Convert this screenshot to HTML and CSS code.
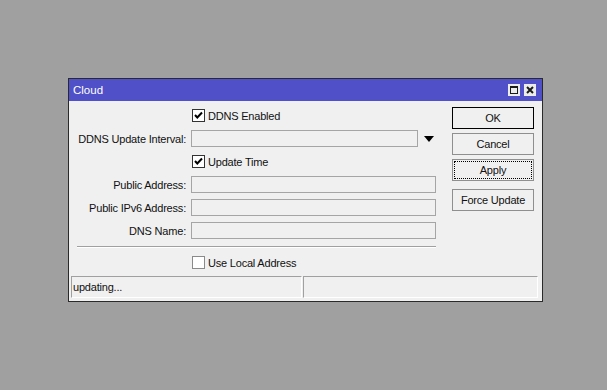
FILE: index.html
```html
<!DOCTYPE html>
<html lang="en">
<head>
    <meta charset="UTF-8">
    <title>Cloud</title>
    <link rel="stylesheet" href="styles.css">
</head>
<body>

<div class="window">
    <div class="titlebar">
        <span class="title">Cloud</span>
        <div class="tb-buttons">
            <span class="tb-btn">
                <svg width="12" height="12" viewBox="0 0 12 12">
                    <rect x="2.5" y="2.5" width="7" height="7" fill="none" stroke="#1a1a1a" stroke-width="1"/>
                    <line x1="2" y1="3" x2="10" y2="3" stroke="#1a1a1a" stroke-width="2"/>
                </svg>
            </span>
            <span class="tb-btn">
                <svg width="12" height="12" viewBox="0 0 12 12">
                    <path d="M3 3 L9 9 M9 3 L3 9" stroke="#1a1a1a" stroke-width="2" fill="none"/>
                </svg>
            </span>
        </div>
    </div>

    <div class="content">
        <div class="form">
            <div class="row">
                <span class="label"></span>
                <label class="check">
                    <span class="cb on">
                        <svg width="11" height="11" viewBox="0 0 11 11"><path d="M2 5 L4.3 7.5 L9 2.5" stroke="#000" stroke-width="2" fill="none"/></svg>
                    </span>
                    DDNS Enabled
                </label>
            </div>
            <div class="row">
                <span class="label">DDNS Update Interval:</span>
                <span class="field short"></span>
                <svg class="arrow" width="10" height="6" viewBox="0 0 10 6"><polygon points="0,0 10,0 5,6" fill="#000"/></svg>
            </div>
            <div class="row">
                <span class="label"></span>
                <label class="check">
                    <span class="cb on">
                        <svg width="11" height="11" viewBox="0 0 11 11"><path d="M2 5 L4.3 7.5 L9 2.5" stroke="#000" stroke-width="2" fill="none"/></svg>
                    </span>
                    Update Time
                </label>
            </div>
            <div class="row">
                <span class="label">Public Address:</span>
                <span class="field"></span>
            </div>
            <div class="row">
                <span class="label">Public IPv6 Address:</span>
                <span class="field"></span>
            </div>
            <div class="row">
                <span class="label">DNS Name:</span>
                <span class="field"></span>
            </div>

            <div class="separator"></div>

            <div class="row">
                <span class="label"></span>
                <label class="check">
                    <span class="cb"></span>
                    Use Local Address
                </label>
            </div>
        </div>

        <div class="buttons">
            <div class="btn default">OK</div>
            <div class="btn">Cancel</div>
            <div class="btn focused">Apply</div>
            <div class="btn">Force Update</div>
        </div>
    </div>

    <div class="status">
        <div class="panel first">updating...</div>
        <div class="panel"></div>
    </div>
</div>

</body>
</html>
```

FILE: styles.css
```css
/* Global styles */
* {
    margin: 0;
    padding: 0;
    box-sizing: border-box;
}

body {
    background: #a0a0a0;
    height: 390px;
    overflow: hidden;
    padding: 78px 0 0 68px;
    font-family: "Liberation Sans", Arial, sans-serif;
    font-size: 11px;
    letter-spacing: -0.2px;
    color: #111;
}

/* Dialog window */
.window {
    width: 475px;
    height: 224px;
    border: 1px solid #2a2a2a;
    background: #f0f0f0;
    display: flex;
    flex-direction: column;
}

.titlebar {
    height: 22px;
    background: #5050c8;
    color: #fff;
    display: flex;
    align-items: center;
    padding: 0 6px 0 4px;
    font-size: 11.5px;
    letter-spacing: 0;
}

.tb-buttons {
    margin-left: auto;
    display: flex;
    gap: 4px;
}

.tb-btn {
    width: 12px;
    height: 12px;
    background: #ececec;
    display: block;
}

.tb-btn svg {
    display: block;
}

/* Form area */
.content {
    display: flex;
    padding-top: 3px;
}

.form {
    width: 367px;
}

.row {
    display: flex;
    align-items: center;
    height: 23px;
}

.label {
    width: 117px;
    margin-right: 5px;
    text-align: right;
    white-space: nowrap;
}

.field {
    width: 245px;
    height: 17px;
    border: 1px solid #a5a5a5;
    background: #f0f0f0;
}

.field.short {
    width: 227px;
}

.arrow {
    margin-left: 6px;
    display: block;
}

.check {
    display: flex;
    align-items: center;
    margin-left: 1px;
}

.cb {
    width: 13px;
    height: 13px;
    border: 1px solid #8a8a8a;
    background: #fff;
    margin-right: 3px;
    display: flex;
    align-items: center;
    justify-content: center;
}

.cb.on {
    border-color: #333;
}

.separator {
    height: 2px;
    margin: 4px 0 3px 8px;
    border-top: 1px solid #a0a0a0;
    border-bottom: 1px solid #fff;
}

/* Buttons column */
.buttons {
    width: 82px;
    margin-left: auto;
    margin-right: 8px;
    padding-top: 3px;
    display: flex;
    flex-direction: column;
    gap: 4px;
}

.btn {
    height: 22px;
    border: 1px solid #8f8f8f;
    background: #f0f0f0;
    display: flex;
    align-items: center;
    justify-content: center;
    position: relative;
}

.btn.default {
    border-color: #000;
}

.btn.focused {
    margin-bottom: 4px;
}

.btn.focused::after {
    content: "";
    position: absolute;
    inset: 1px;
    border: 1px dotted #000;
}

/* Status bar */
.status {
    margin-top: auto;
    display: flex;
    gap: 1px;
    padding: 0 4px 3px 2px;
}

.panel {
    height: 22px;
    flex: 1;
    border-top: 1px solid #a0a0a0;
    border-left: 1px solid #a0a0a0;
    border-right: 1px solid #fff;
    border-bottom: 1px solid #fff;
    padding-left: 1px;
    display: flex;
    align-items: center;
}

.panel.first {
    flex: none;
    width: 231px;
}
```
